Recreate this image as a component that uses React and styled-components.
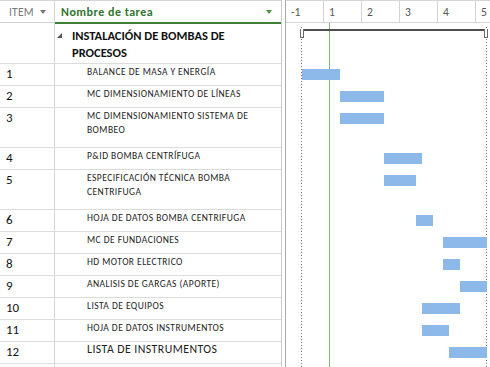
import React from 'react'
import styled, { createGlobalStyle } from 'styled-components'

const GlobalStyle = createGlobalStyle`
	html, body {
		margin: 0;
		padding: 0;
		background: #fff;
		overflow: hidden;
	}
	body {
		font-family: Carlito, Lato, 'Liberation Sans', sans-serif;
		color: #222;
	}
`

const ROW = 22
const TALL = 40

const tasks = [
	{ id: 1, name: ['BALANCE DE MASA Y ENERGÍA'], bar: [16, 38] },
	{ id: 2, name: ['MC DIMENSIONAMIENTO DE LÍNEAS'], bar: [54, 44] },
	{ id: 3, name: ['MC DIMENSIONAMIENTO SISTEMA DE', 'BOMBEO'], bar: [54, 44] },
	{ id: 4, name: ['P&ID BOMBA CENTRÍFUGA'], bar: [98, 38] },
	{ id: 5, name: ['ESPECIFICACIÓN TÉCNICA BOMBA', 'CENTRIFUGA'], bar: [98, 32] },
	{ id: 6, name: ['HOJA DE DATOS BOMBA CENTRIFUGA'], bar: [130, 17] },
	{ id: 7, name: ['MC DE FUNDACIONES'], bar: [157, 44] },
	{ id: 8, name: ['HD MOTOR ELECTRICO'], bar: [157, 17] },
	{ id: 9, name: ['ANALISIS DE GARGAS (APORTE)'], bar: [174, 27] },
	{ id: 10, name: ['LISTA DE EQUIPOS'], bar: [136, 38] },
	{ id: 11, name: ['HOJA DE DATOS INSTRUMENTOS'], bar: [136, 27] },
	{ id: 12, name: ['LISTA DE INSTRUMENTOS'], bar: [163, 38], big: true }
]

const ticks = ['-1', '1', '2', '3', '4', '5']

const Screen = styled.div`
	display: flex;
	width: 490px;
	height: 367px;
	overflow: hidden;
`

const TaskTable = styled.div`
	width: 282px;
	flex: none;
	border-right: 1px solid #c9c9c9;
	box-sizing: border-box;
`

const HeaderRow = styled.div`
	display: grid;
	grid-template-columns: 55px 1fr;
	height: 23px;
	box-sizing: border-box;
	border-top: 1px solid #d6d6d6;
`

const HeaderCell = styled.div`
	display: flex;
	align-items: flex-start;
	justify-content: space-between;
	box-sizing: border-box;
	padding: 5px ${(p) => (p.$active ? '9px' : '8px')} 0 ${(p) => (p.$active ? '6px' : '9px')};
	font-size: ${(p) => (p.$active ? '12px' : '11.5px')};
	letter-spacing: ${(p) => (p.$active ? '0.5px' : '0.2px')};
	line-height: 13px;
	font-weight: ${(p) => (p.$active ? 700 : 400)};
	color: ${(p) => (p.$active ? '#31752f' : '#777')};
	border-right: ${(p) => (p.$active ? 'none' : '1px solid #d4d4d4')};
	border-bottom: ${(p) => (p.$active ? '2px solid #3f7f36' : '1px solid #d4d4d4')};
	margin-bottom: ${(p) => (p.$active ? '-1px' : '0')};
`

const SortArrow = styled.span`
	width: 0;
	height: 0;
	margin-top: 4px;
	border-left: ${(p) => (p.$active ? 3.5 : 3)}px solid transparent;
	border-right: ${(p) => (p.$active ? 3.5 : 3)}px solid transparent;
	border-top: 4px solid ${(p) => (p.$active ? '#4f8f46' : '#777')};
`

const Row = styled.div`
	display: grid;
	grid-template-columns: 55px 1fr;
	height: ${(p) => p.$h}px;
	box-sizing: border-box;
	border-bottom: 1px solid #dcdcdc;
`

const IdCell = styled.div`
	border-right: 1px solid #d4d4d4;
	padding: 2px 0 0 6px;
	font-size: 13px;
	line-height: 16px;
	color: #111;
`

const NameCell = styled.div`
	padding: ${(p) => (p.$big ? '0' : '1px')} 0 0 32px;
	font-size: ${(p) => (p.$big ? '11.8px' : '9.5px')};
	letter-spacing: 0.45px;
	line-height: 14px;
	color: #1e1e1e;
	white-space: nowrap;
`

const SummaryCell = styled.div`
	display: flex;
	align-items: flex-start;
	gap: 10px;
	padding: 4px 0 0 2px;
	font-size: 12.5px;
	line-height: 17px;
	font-weight: 700;
	color: #111;
	white-space: nowrap;
`

const Collapse = styled.span`
	width: 0;
	height: 0;
	margin-top: 6px;
	border-left: 5px solid transparent;
	border-bottom: 5px solid #555;
`

const Splitter = styled.div`
	width: 3px;
	flex: none;
`

const Chart = styled.div`
	flex: 1;
	display: flex;
	flex-direction: column;
	border-left: 1px solid #a9a9a9;
	min-width: 0;
`

const Timescale = styled.div`
	display: flex;
	height: 23px;
	box-sizing: border-box;
	border-top: 1px solid #d6d6d6;
	border-bottom: 1px solid #d6d6d6;
`

const Tick = styled.div`
	width: 38px;
	flex: none;
	box-sizing: border-box;
	border-right: 1px solid #d4d4d4;
	padding: 5px 0 0 5px;
	font-size: 11.5px;
	line-height: 13px;
	color: #555;
`

const ChartBody = styled.div`
	position: relative;
	flex: 1;
`

const ChartRow = styled.div`
	position: relative;
	height: ${(p) => p.$h}px;
`

const TaskBar = styled.div`
	position: absolute;
	top: 5px;
	height: 11px;
	background: #8cb9e9;
`

const SummaryBar = styled.div`
	position: absolute;
	top: 6px;
	left: 15px;
	width: 186px;
	height: 2px;
	background: #4f4f4f;

	&::before,
	&::after {
		content: '';
		position: absolute;
		top: 0;
		width: 2px;
		height: 8px;
		border: 1px solid #6a6a6a;
		border-top: none;
		background: #fff;
	}
	&::before {
		left: -1px;
	}
	&::after {
		right: -1px;
	}
`

const DottedLine = styled.div`
	position: absolute;
	top: 4px;
	bottom: 0;
	left: ${(p) => p.$at}px;
	width: 1px;
	background: repeating-linear-gradient(to bottom, #7a7a7a 0 1px, transparent 1px 3px);
`

const TodayLine = styled.div`
	position: absolute;
	top: 0;
	bottom: 0;
	left: 43px;
	width: 1px;
	background: #7fb874;
`

export default function App() {
	return (
		<Screen>
			<GlobalStyle />
			<TaskTable>
				<HeaderRow>
					<HeaderCell>
						ITEM
						<SortArrow />
					</HeaderCell>
					<HeaderCell $active>
						Nombre de tarea
						<SortArrow $active />
					</HeaderCell>
				</HeaderRow>
				<Row $h={41}>
					<IdCell />
					<SummaryCell>
						<Collapse />
						<div>
							INSTALACIÓN DE BOMBAS DE
							<br />
							PROCESOS
						</div>
					</SummaryCell>
				</Row>
				{tasks.map((t) => (
					<Row key={t.id} $h={t.name.length > 1 ? TALL : ROW}>
						<IdCell>{t.id}</IdCell>
						<NameCell $big={t.big}>
							{t.name.map((line) => (
								<div key={line}>{line}</div>
							))}
						</NameCell>
					</Row>
				))}
				<Row $h={ROW}>
					<IdCell />
					<NameCell />
				</Row>
			</TaskTable>
			<Splitter />
			<Chart>
				<Timescale>
					{ticks.map((n) => (
						<Tick key={n}>{n}</Tick>
					))}
				</Timescale>
				<ChartBody>
					<DottedLine $at={15} />
					<DottedLine $at={200} />
					<TodayLine />
					<ChartRow $h={41}>
						<SummaryBar />
					</ChartRow>
					{tasks.map((t) => (
						<ChartRow key={t.id} $h={t.name.length > 1 ? TALL : ROW}>
							<TaskBar style={{ left: t.bar[0], width: t.bar[1] }} />
						</ChartRow>
					))}
				</ChartBody>
			</Chart>
		</Screen>
	)
}
